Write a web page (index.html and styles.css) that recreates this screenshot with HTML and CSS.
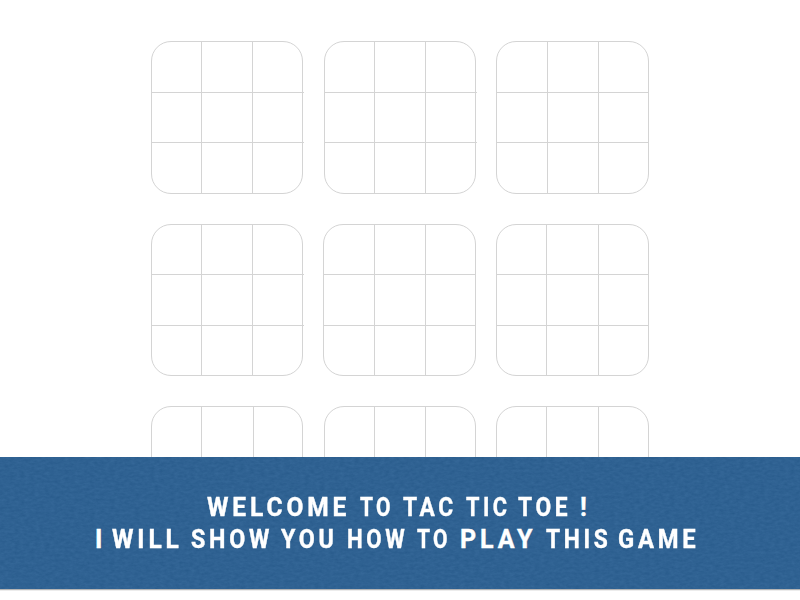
FILE: index.html
```html
<!DOCTYPE html>
<html lang="en">
<head>
<meta charset="utf-8">
<title>Tac Tic Toe</title>
<link rel="stylesheet" href="styles.css">
</head>
<body>
<main class="boards">
  <div class="board narrow over"><i></i><i></i><i></i><i></i><i></i><i></i><i></i><i></i><i></i></div>
  <div class="board narrow over"><i></i><i></i><i></i><i></i><i></i><i></i><i></i><i></i><i></i></div>
  <div class="board"><i></i><i></i><i></i><i></i><i></i><i></i><i></i><i></i><i></i></div>
  <div class="board narrow over mid"><i></i><i></i><i></i><i></i><i></i><i></i><i></i><i></i><i></i></div>
  <div class="board mid"><i></i><i></i><i></i><i></i><i></i><i></i><i></i><i></i><i></i></div>
  <div class="board mid wide-center"><i></i><i></i><i></i><i></i><i></i><i></i><i></i><i></i><i></i></div>
  <div class="board narrow wide-center"><i></i><i></i><i></i><i></i><i></i><i></i><i></i><i></i><i></i></div>
  <div class="board narrow"><i></i><i></i><i></i><i></i><i></i><i></i><i></i><i></i><i></i></div>
  <div class="board wide-center"><i></i><i></i><i></i><i></i><i></i><i></i><i></i><i></i><i></i></div>
</main>
<section class="banner">
  <svg class="paper" width="800" height="132" aria-hidden="true">
    <filter id="grain" x="0" y="0" width="100%" height="100%" color-interpolation-filters="sRGB">
      <feTurbulence type="fractalNoise" baseFrequency="0.2 0.38" numOctaves="4" seed="8"/>
      <feColorMatrix values="0.06 0 0 0 0.155  0.06 0 0 0 0.353  0.06 0 0 0 0.543  0 0 0 0 1"/>
    </filter>
    <rect width="800" height="132" filter="url(#grain)"/>
  </svg>
  <p class="line first"><span class="w98">WELCOME</span> <span class="w84">TO</span> <span class="w91">TAC</span> <span class="w87">TIC</span> <span class="w91">TOE</span> <span>!</span></p>
  <p class="line second"><span>I</span> <span class="w98">WILL</span> <span class="w93">SHOW</span> <span class="w93">YOU</span> <span class="w89">HOW</span> <span class="w84">TO</span> <span>PLAY</span> <span class="w91">THIS</span> <span class="w95">GAME</span></p>
</section>
</body>
</html>
```
FILE: styles.css
```css
body {
  margin: 0;
  height: 600px;
  overflow: hidden;
  display: flex;
  flex-direction: column;
  background: #fff;
}

.boards {
  box-sizing: border-box;
  height: 457px;
  flex: none;
  overflow: hidden;
  padding: 41px 0 0 151px;
  display: grid;
  grid-template-columns: 152px 153px 153px;
  grid-template-rows: 153px 152px 152px;
  gap: 30px 20px;
}

.board {
  --c1: 50px;
  --c2: 51px;
  --r1: 50px;
  --r2: 50px;
  box-sizing: border-box;
  width: 153px;
  justify-self: end;
  border: 1px solid #d4d4d4;
  border-radius: 20px;
  display: grid;
  grid-template-columns: var(--c1) var(--c2) 1fr;
  grid-template-rows: var(--r1) var(--r2) 1fr;
}

.board i { border: 0 solid #d4d4d4; }
.board i:not(:nth-child(3n+1)) { border-left-width: 1px; }
.board i:nth-child(n+4) { border-top-width: 1px; }

.narrow { width: 152px; --c1: 49px; }
.mid { --r1: 49px; --r2: 51px; }
.wide-center { --c1: 49px; --c2: 52px; }
.over i:nth-child(3n):nth-child(n+4) { margin-right: -2px; }

.banner {
  position: relative;
  flex: none;
  box-sizing: border-box;
  height: 132px;
  padding-top: 35px;
  background: #2f6192;
  box-shadow: 0 1px 0 #b5b5b5, 0 2px 0 #ececec;
}

.paper {
  position: absolute;
  inset: 0;
}

.line {
  position: relative;
  margin: 0;
  display: grid;
  color: #fff;
  font: 700 25px/32px Roboto, sans-serif;
  letter-spacing: 4px;
  -webkit-text-stroke: 0.4px #fff;
  white-space: nowrap;
}

.line span { transform-origin: left; }

.w84 { transform: scaleX(0.84); }
.w87 { transform: scaleX(0.87); }
.w89 { transform: scaleX(0.89); }
.w91 { transform: scaleX(0.91); }
.w93 { transform: scaleX(0.93); }
.w95 { transform: scaleX(0.95); }
.w98 { transform: scaleX(0.98); }

.first {
  padding-left: 207px;
  grid-template-columns: 153px 43px 63px 52px 62px auto;
}

.second {
  padding-left: 95px;
  grid-template-columns: 17px 79px 90px 66px 70px 43px 86px 72px auto;
}
```
